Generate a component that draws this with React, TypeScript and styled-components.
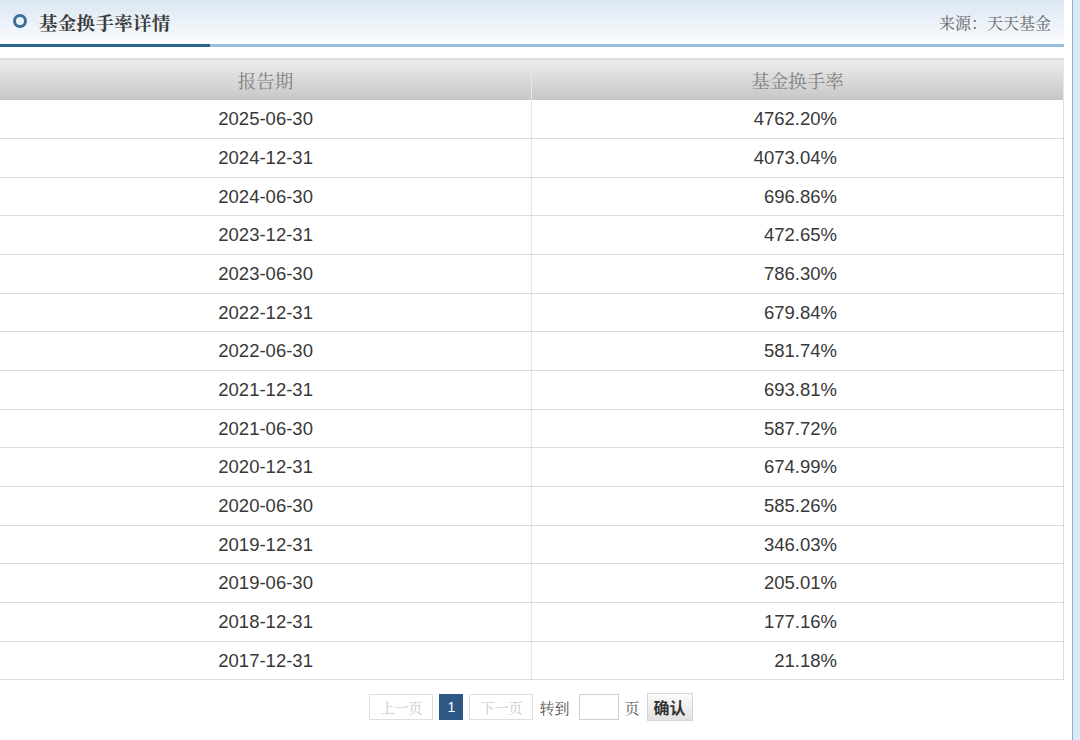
import React from "react";
import styled, { createGlobalStyle } from "styled-components";

const Global = createGlobalStyle`
  html, body { margin: 0; padding: 0; background: #fff; }
  body { font-family: "Liberation Sans", Arial, "Noto Sans CJK SC", sans-serif; }
`;

const Page = styled.div`
  display: flex;
  width: 1080px;
  height: 740px;
  overflow: hidden;
`;

const Main = styled.div`
  width: 1064px;
  flex: none;
  display: flex;
  flex-direction: column;
`;

const SideStrip = styled.div`
  margin-left: 8px;
  width: 7px;
  flex: none;
  background: #dbe8f6;
  border-left: 1px solid #86afd0;
`;

const Header = styled.div`
  height: 44px;
  display: flex;
  align-items: center;
  justify-content: space-between;
  padding: 0 13px 0 13px;
  background: linear-gradient(to bottom, #dbe6f2, #fbfcfe);
`;

const TitleGroup = styled.div`
  display: flex;
  align-items: center;
  gap: 12px;
`;

const Ring = styled.span`
  width: 8px;
  height: 8px;
  border-radius: 50%;
  border: 3px solid #3b6f98;
  display: block;
  margin-top: -2px;
`;

const Title = styled.h1`
  margin: 0;
  font-size: 18.5px;
  font-weight: bold;
  color: #3a3a3a;
  font-family: "Noto Serif CJK SC", "Liberation Serif", serif;
  letter-spacing: 0.3px;
`;

const Source = styled.span`
  font-size: 16px;
  color: #666;
  font-family: "Noto Serif CJK SC", "Liberation Serif", serif;
`;

const Underline = styled.div`
  display: flex;
  height: 3px;
`;

const UnderlineDark = styled.div`
  width: 210px;
  background: #2a6590;
`;

const UnderlineLight = styled.div`
  flex: 1;
  background: #97bfdd;
`;

const Table = styled.table`
  margin-top: 11px;
  width: 1064px;
  border-collapse: collapse;
  table-layout: fixed;
`;

const HeadCell = styled.th`
  height: 41px;
  padding: 0;
  font-weight: normal;
  font-size: 18.5px;
  color: #808080;
  font-family: "Noto Serif CJK SC", "Liberation Serif", serif;
  background: linear-gradient(to bottom, #ececec, #c6c6c6);
  border-top: 1px solid #e2e2e2;
  border-right: 1px solid #e8e8e8;
  text-align: center;
`;

const Row = styled.tr`
  height: 38.67px;
`;

const Cell = styled.td<{ $right?: boolean }>`
  padding: 0 ${(p) => (p.$right ? "226px" : "0")} 0 0;
  font-size: 18.5px;
  color: #383838;
  text-align: ${(p) => (p.$right ? "right" : "center")};
  border-bottom: 1px solid #dcdcdc;
  border-right: 1px solid ${(p) => (p.$right ? "#dcdcdc" : "#e6e6e6")};
`;

const Pager = styled.div`
  margin-top: 13px;
  display: flex;
  justify-content: center;
  align-items: center;
  gap: 6px;
  font-family: "Noto Serif CJK SC", "Liberation Serif", serif;
  padding-left: 0;
  padding-right: 2px;
`;

const PageBtn = styled.span<{ $active?: boolean }>`
  box-sizing: border-box;
  height: 26px;
  min-width: 24px;
  padding: 0 ${(p) => (p.$active ? "0" : "10px")};
  display: flex;
  align-items: center;
  justify-content: center;
  font-size: 14px;
  border: 1px solid ${(p) => (p.$active ? "#2c5787" : "#dedede")};
  background: ${(p) => (p.$active ? "#2d5886" : "#fff")};
  color: ${(p) => (p.$active ? "#fff" : "#c8c8c8")};
  font-family: ${(p) => (p.$active ? '"Liberation Sans", Arial, sans-serif' : "inherit")};
`;

const PagerText = styled.span<{ $right?: number }>`
  font-size: 15px;
  color: #555;
  margin-right: ${(p) => p.$right ?? 0}px;
`;

const PageInput = styled.input`
  box-sizing: border-box;
  width: 40px;
  height: 26px;
  border: 1px solid #cfcfcf;
  margin: 0;
  padding: 0;
`;

const ConfirmBtn = styled.button`
  box-sizing: border-box;
  height: 28px;
  width: 46px;
  margin-left: 1px;
  padding: 0;
  border: 1px solid #d6d6d6;
  background: linear-gradient(to bottom, #fafafa, #e2e2e2);
  font-size: 16px;
  font-weight: bold;
  color: #333;
  font-family: "Noto Sans CJK SC", sans-serif;
  line-height: 1;
`;

const data: [string, string][] = [
  ["2025-06-30", "4762.20%"],
  ["2024-12-31", "4073.04%"],
  ["2024-06-30", "696.86%"],
  ["2023-12-31", "472.65%"],
  ["2023-06-30", "786.30%"],
  ["2022-12-31", "679.84%"],
  ["2022-06-30", "581.74%"],
  ["2021-12-31", "693.81%"],
  ["2021-06-30", "587.72%"],
  ["2020-12-31", "674.99%"],
  ["2020-06-30", "585.26%"],
  ["2019-12-31", "346.03%"],
  ["2019-06-30", "205.01%"],
  ["2018-12-31", "177.16%"],
  ["2017-12-31", "21.18%"],
];

export default function App() {
  return (
    <>
      <Global />
      <Page>
        <Main>
          <Header>
            <TitleGroup>
              <Ring />
              <Title>基金换手率详情</Title>
            </TitleGroup>
            <Source>来源：天天基金</Source>
          </Header>
          <Underline>
            <UnderlineDark />
            <UnderlineLight />
          </Underline>
          <Table>
            <thead>
              <tr>
                <HeadCell>报告期</HeadCell>
                <HeadCell>基金换手率</HeadCell>
              </tr>
            </thead>
            <tbody>
              {data.map(([d, r]) => (
                <Row key={d}>
                  <Cell>{d}</Cell>
                  <Cell $right>{r}</Cell>
                </Row>
              ))}
            </tbody>
          </Table>
          <Pager>
            <PageBtn>上一页</PageBtn>
            <PageBtn $active>1</PageBtn>
            <PageBtn>下一页</PageBtn>
            <PagerText $right={3}>转到</PagerText>
            <PageInput />
            <PagerText>页</PagerText>
            <ConfirmBtn>确认</ConfirmBtn>
          </Pager>
        </Main>
        <SideStrip />
      </Page>
    </>
  );
}
